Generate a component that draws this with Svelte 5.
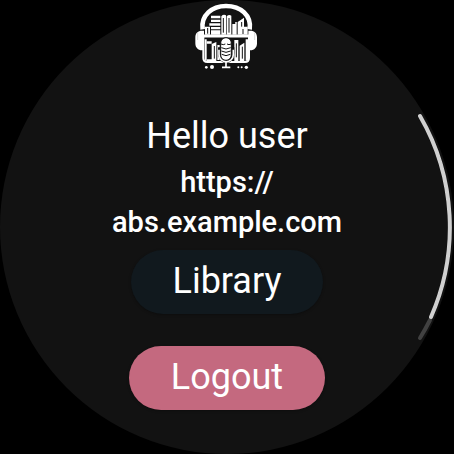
<script>
  const name = 'user';
  const server = ['https://', 'abs.example.com'];
</script>

<main class="watch">
  <div class="content">
    <svg class="logo" viewBox="0 0 198 210" role="img" aria-label="Audiobook library">
      <g transform="translate(-24 0)">
        <!-- headband -->
        <path d="M50 88 C44 46 78 18 120 18 C164 18 197 46 191 88" fill="none" stroke="#fff" stroke-width="14" />
        <!-- ear cups -->
        <path d="M48 92 C36 92 28 99 28 111 V130 C28 143 36 151 48 151 H54 V92Z M193 92 C205 92 213 99 213 111 V130 C213 143 205 151 193 151 H187 V92Z" fill="#fff" />
        <path d="M35 98 V120 M206 98 V120" stroke="#888" stroke-width="1" />
        <!-- upper shelf -->
        <g fill="#fff">
          <path d="M57 80 H72 V104 H57Z M75 47 H103 V55 H75Z M75 59 H103 V66 H75Z M70 70 H103 V77 H70Z M75 81 H103 V88 H75Z M75 91 H103 V104 H75Z" />
          <path d="M106 49 Q112 42 120 46 V104 H106Z M122 49 Q129 42 136 47 V104 H122Z" />
          <path d="M139 72 H152 V104 H139Z M155 66 L163 61 L174 53 V80 H185 V104 H155Z" />
        </g>
        <path d="M112 54 V98 M129 54 V98 M167 66 V80 M171 87 V102 M65 84 V101" stroke="#121212" stroke-width="3" />
        <circle cx="150" cy="69" r="3" fill="#fff" />
        <!-- shelf frame -->
        <path d="M52 108 H189 V174 Q189 186 177 186 H64 Q52 186 52 174Z" fill="none" stroke="#fff" stroke-width="6" />
        <path d="M52 108 H189" stroke="#fff" stroke-width="9" />
        <!-- lower shelf -->
        <g fill="#fff">
          <path d="M56 118 H62 V182 H56Z M77 132 L91 126 V184 H77Z M94 135 H101 V180 H94Z M145 120 H157 V184 H145Z M161 137 L175 128 V184 H161Z M179 118 H187 V182 H179Z" />
          <path d="M62 124 H77 V131 H62Z M62 178 H78 V184 H62Z" />
        </g>
        <path d="M85 138 V176 M151 130 V172 M169 140 V176" stroke="#121212" stroke-width="3" />
        <!-- microphone -->
        <path d="M101 142 V160 C101 192 140 192 140 160 V142" fill="#121212" stroke="#121212" stroke-width="10" />
        <rect x="104" y="113" width="32" height="68" rx="16" fill="#fff" stroke="#121212" stroke-width="3" />
        <path d="M105 132 Q112 136 118 132 M123 132 Q129 136 135 132 M106 143 Q120 151 134 143 M106 153 Q120 161 134 153 M107 163 Q120 171 133 163" fill="none" stroke="#121212" stroke-width="3" />
        <path d="M99 149 V163 C99 193 142 193 142 163 V149" fill="none" stroke="#fff" stroke-width="5" />
        <path d="M120 186 V201 M108 202 H133" stroke="#fff" stroke-width="5" />
        <g fill="#fff">
          <circle cx="61" cy="202" r="4" /><circle cx="78" cy="201" r="6" />
          <circle cx="157" cy="202" r="3" /><circle cx="167" cy="202" r="3" /><circle cx="181" cy="202" r="5" />
        </g>
      </g>
    </svg>

    <h1>Hello {name}</h1>
    <p>{server[0]}<wbr />{server[1]}</p>
    <button class="library" type="button">Library</button>
    <button class="logout" type="button">Logout</button>
  </div>

  <svg class="scroll" viewBox="0 0 454 454" aria-hidden="true">
    <path d="M430 320 A222.5 222.5 0 0 1 420 338" stroke="#414141" />
    <path d="M420 116 A222.5 222.5 0 0 1 431 317" stroke="#d0d0d0" />
  </svg>
</main>

<style>
  :global(body) {
    margin: 0;
    background: #000;
  }

  .watch {
    position: relative;
    width: 100%;
    max-width: 100vh;
    aspect-ratio: 1;
    margin: 0 auto;
    overflow: hidden;
    border-radius: 50%;
    background: #121212;
    color: #fff;
    font-family: Roboto, sans-serif;
  }

  .content {
    display: flex;
    flex-direction: column;
    align-items: center;
    text-align: center;
  }

  .logo {
    display: block;
    width: 66px;
    height: 70px;
    margin-bottom: 44px;
  }

  h1 {
    margin: 0 0 4px;
    font-size: 36px;
    font-weight: 400;
    line-height: 44px;
  }

  p {
    width: 240px;
    margin: 0 0 8px;
    font-size: 29px;
    font-weight: 500;
    line-height: 40px;
  }

  button {
    height: 64px;
    padding: 0 42px 2px;
    border: 0;
    border-radius: 32px;
    color: #fff;
    font-family: inherit;
    font-size: 36px;
    line-height: 44px;
    box-shadow: 0 1px 3px rgb(0 0 0 / 30%);
  }

  .library {
    margin-bottom: 32px;
    background: #11191e;
  }

  .logout {
    background: #c4697f;
  }

  .scroll {
    position: absolute;
    inset: 0;
    width: 100%;
    height: 100%;
    pointer-events: none;
  }

  .scroll path {
    fill: none;
    stroke-width: 4;
    stroke-linecap: round;
  }
</style>
